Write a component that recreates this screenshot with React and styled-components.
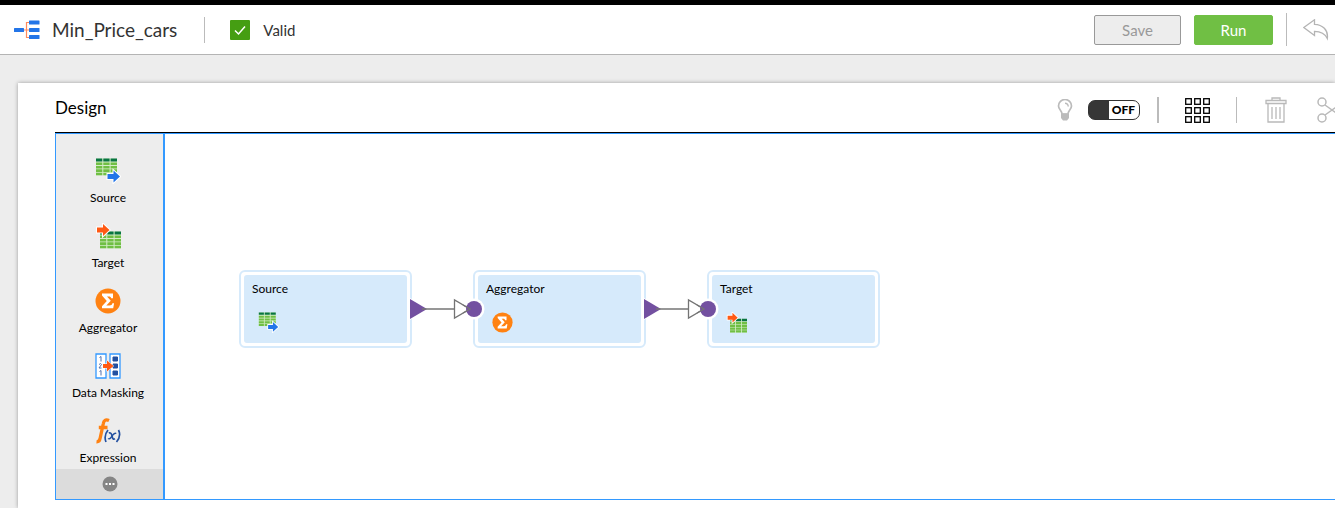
import React from "react";
import styled, { createGlobalStyle } from "styled-components";

const Global = createGlobalStyle`
  * { box-sizing: border-box; }
  body { margin: 0; font-family: Lato, "Liberation Sans", sans-serif; color: #000; background: #ededed; overflow: hidden; }
  button { font-family: inherit; }
`;
const Page = styled.div`
  display: flex; flex-direction: column; min-height: 100vh; overflow: hidden; border-top: 5px solid #000;
`;
const Header = styled.header`
  display: flex; align-items: center; height: 50px; padding: 0 6px 0 14px; background: #fff; border-bottom: 1px solid #b4b4b4;
`;
const Title = styled.h1`
  margin: 0 27px 0 12px; font-size: 19px; line-height: 24px; font-weight: 400; color: #333;
`;
const Divider = styled.span`
  flex: none; width: ${p => p.$wide ? 2 : 1}px; height: ${p => p.$h || 26}px; background: #bbb;
`;
const Status = styled.span`
  display: flex; align-items: center; gap: 13px; margin-left: 25px; font-size: 15px; line-height: 20px; color: #333;
`;
const Actions = styled.div`
  display: flex; align-items: center; gap: 13px; margin-left: auto;
`;
const Button = styled.button`
  width: ${p => p.$primary ? 79 : 87}px; height: 30px; padding: 0; border-radius: 2px; font-size: 15px; line-height: 20px;
  color: ${p => p.$primary ? "#fff" : "#999"};
  background: ${p => p.$primary ? "#70bf44" : "#ededed"};
  border: 1px solid ${p => p.$primary ? "#70bf44" : "#999"};
`;
const IconButton = styled.button`
  display: flex; flex: none; padding: 0; border: 0; background: none;
  margin: 0 ${p => p.$right || 0}px 0 ${p => p.$left || 0}px;
`;
const Panel = styled.main`
  flex: 1; margin: 28px 0 0 18px; padding: 0 0 8px 37px; background: #fff; box-shadow: 0 0 4px rgba(0, 0, 0, 0.35);
`;
const PanelHeader = styled.div`
  display: flex; align-items: center; height: 50px; border-bottom: 1px solid #000;
`;
const PanelTitle = styled.h2`
  margin: 0; font-size: 17px; line-height: 24px; font-weight: 400;
`;
const Tools = styled.div`
  display: flex; align-items: center; margin: 5px -8px 0 auto;
`;
const Switch = styled.button`
  display: flex; align-items: center; justify-content: flex-end; width: 52px; height: 20px; margin: 0 17px 0 15px;
  padding: 0 4px; border: 1px solid #333; border-radius: 7px; font-size: 12px; line-height: 16px; font-weight: 900; color: #000;
  background: linear-gradient(to right, #363636 20px, #fff 20px);
`;
const Workspace = styled.div`
  display: flex; border: 1px solid #3399ff; border-right: 0;
`;
const Palette = styled.nav`
  flex: none; width: 109px; padding-top: 10px; background: #ededed; border-right: 2px solid #3399ff;
`;
const PaletteItem = styled.button`
  display: flex; flex-direction: column; align-items: center; gap: 6px; width: 100%; height: 65px; padding: 14px 3px 0 0;
  border: 0; background: none; font-size: 12px; line-height: 16px; color: #000; white-space: nowrap;
`;
const More = styled.button`
  display: flex; align-items: center; justify-content: center; width: 100%; height: 30px; padding: 0; border: 0; background: #dcdcdc;
`;
const Canvas = styled.div`
  position: relative; flex: 1; min-width: 0; overflow: hidden;
`;
const Node = styled.section`
  position: absolute; top: 136px; left: ${p => p.$x}px; width: 173px; height: 78px; padding: 3px;
  background: #fff; border: 2px solid #d6eafb; border-radius: 6px;
`;
const NodeBody = styled.div`
  height: 100%; padding: 6px 8px; background: #d6eafb; border-radius: 3px;
`;
const NodeTitle = styled.h3`
  margin: 0 0 15px; font-size: 12px; line-height: 16px; font-weight: 400;
`;
const NodeIcon = styled.div`
  display: flex; margin-left: 6px;
`;
const Link = styled.svg`
  position: absolute; top: 162px; left: ${p => p.$x}px;
`;

const Table = ({ x, y }) => (
  <g>
    <rect x={x} y={y} width="21" height="17" fill="#d5edc8" />
    <path d={`M${x} ${y}h6.3v3h-6.3zm7.3 0h6.3v3h-6.3zm7.3 0h6.4v3h-6.4z`} fill="#087541" />
    {[4, 7.4, 10.8, 14.2].map(r => (
      <path key={r} d={`M${x} ${y + r}h6.3v2.6h-6.3zm7.3 0h6.3v2.6h-6.3zm7.3 0h6.4v2.6h-6.4z`} fill="#70bf44" />
    ))}
  </g>
);
const arrow = "v-5h6v-3.500l6.500 6-6.500 6v-3.500z";
const SourceIcon = ({ size = 26 }) => (
  <svg width={size} height={size} viewBox="0 0 26 26">
    <Table x={1} y={0.5} />
    <path d={"M12.500 21" + arrow} fill="#2375e8" stroke="#fff" strokeWidth="2" paintOrder="stroke" />
  </svg>
);
const TargetIcon = ({ size = 26 }) => (
  <svg width={size} height={size} viewBox="0 0 26 26">
    <Table x={5} y={8.5} />
    <path d={"M2 9.500" + arrow} fill="#ff5a14" stroke="#fff" strokeWidth="2" paintOrder="stroke" />
  </svg>
);
const SigmaIcon = ({ size = 26 }) => (
  <svg width={size} height={size} viewBox="0 0 26 26">
    <circle cx="13" cy="13" r="12.5" fill="#ff8212" />
    <path d="M7 5.500h11v4.800h-1.800c-.3-1.300-1-1.800-2.400-1.800h-1.800l3.800 4.200-4.500 4.800h3.200c1.800 0 2.500-.7 2.900-2.200h1.700l-.9 5H7v-2l4.800-5.200L7 7.500z" fill="#fff" />
  </svg>
);
const MaskIcon = () => (
  <svg width="26" height="26" viewBox="0 0 26 26">
    <path d="M1 1h10v24H1zM15 1h10v24H15z" fill="#fff" stroke="#3399ff" strokeWidth="1.3" />
    <path d="M4.500 4.500l1.500-1v5M4.500 18.500l1.500-1v5M4 11.500q2-2 2.500 0L4 15h2.500" fill="none" stroke="#5070ad" />
    <path d="M18 4h4.500v4H18zM18 11h4.500v4H18zM18 18h4.500v4H18z" fill="#2350a0" stroke="#2350a0" strokeLinejoin="round" />
    <path d="M8 15v-4h4V7.500l6.500 5.500-6.500 5.500V15z" fill="#ff5a14" stroke="#fff" paintOrder="stroke" />
  </svg>
);
const FxIcon = () => (
  <svg width="26" height="26" viewBox="0 0 26 26">
    <path d="M14 2.600C10.500 1 8.800 2.500 8.200 6L5.200 20Q4.500 24 1.500 23.800M3.800 9.500h8.700" fill="none" stroke="#ff8212" strokeWidth="3.300" />
    <path d="M13 12q-4.500 5.500-2 12M23.500 12q3 6-2 12M13.800 15q2.200-.8 3 2l.8 3q.5 1.800 2.400.8" fill="none" stroke="#2350a0" strokeWidth="1.700" />
    <path d="M21.300 15.500q-1.500-1-3.500 1.500l-1.800 2.500q-1.500 2-3 1" fill="none" stroke="#2350a0" strokeWidth="1.300" />
  </svg>
);
const MappingIcon = () => (
  <svg width="26" height="20" viewBox="0 0 26 20">
    <path d="M10 10h6M16 2.500h-3.500v15H16" fill="none" stroke="#ff8b5c" strokeWidth="1.200" />
    <rect y="8" width="10" height="4" rx=".5" fill="#2375e8" />
    {[0.5, 8, 15].map(y => <rect key={y} x="15" y={y} width="10.500" height="4" rx=".5" fill="#2375e8" />)}
  </svg>
);
const CheckIcon = () => (
  <svg width="20" height="20" viewBox="0 0 20 20">
    <rect width="20" height="20" rx="1" fill="#459e12" />
    <path d="M5 10.500l3.500 3.500L15 6.500" fill="none" stroke="#fff" strokeWidth="1.500" />
  </svg>
);
const UndoIcon = () => (
  <svg width="26" height="22" viewBox="0 0 26 22" fill="none" stroke="#b4b4b4" strokeWidth="1.300">
    <path d="M.8 8.500L11.500 .8v4.500C19.500 5.500 25.500 11 24.300 19.500 22 14.500 17 12.300 11.500 12.300v4.200z" />
  </svg>
);
const BulbIcon = () => (
  <svg width="16" height="22" viewBox="0 0 16 22">
    <path d="M5 15C5 11.500 1.500 10.500 1.500 7a6.300 6.300 0 0 1 13 0C14.500 10.500 11 11.500 11 15z" fill="none" stroke="#bbb" strokeWidth="1.700" />
    <path d="M4 14.500h8v4.500L10 21.500H6L4 19zM8 3.500q3.500 0 4 4h-1.500q0-2.500-2.500-2.500z" fill="#bbb" />
  </svg>
);
const GridIcon = () => (
  <svg width="25" height="25" viewBox="0 0 25 25" fill="none" stroke="#000" strokeWidth="1.300">
    {[0, 9, 18].map(y => [0, 9, 18].map(x => <rect key={`${x}-${y}`} x={x + 0.7} y={y + 0.7} width="5.600" height="5.600" />))}
  </svg>
);
const TrashIcon = () => (
  <svg width="22" height="26" viewBox="0 0 22 26" fill="none" stroke="#b9b9b9" strokeWidth="1.300">
    <path d="M1 3.500h20v3H1zM7 3.500V1h8v2.500M3 6.500V25h16V6.500M7 10v12M11 10v12M15 10v12" />
  </svg>
);
const CutIcon = () => (
  <svg width="26" height="26" viewBox="0 0 26 26" fill="none" stroke="#b9b9b9" strokeWidth="1.500">
    <circle cx="5" cy="5" r="4" /><circle cx="5" cy="21" r="4" />
    <path d="M8 8l17 12M8 18L25 6" />
  </svg>
);

const transformations = [
  ["Source", SourceIcon], ["Target", TargetIcon], ["Aggregator", SigmaIcon], ["Data Masking", MaskIcon], ["Expression", FxIcon],
];
const nodes = [
  { name: "Source", x: 74, Icon: SourceIcon },
  { name: "Aggregator", x: 308, Icon: SigmaIcon },
  { name: "Target", x: 542, Icon: TargetIcon },
];
const Connector = ({ x }) => (
  <Link $x={x} width="80" height="26" viewBox="0 0 80 26">
    <path d="M3 2v22l18-11z" fill="#fff" />
    <path d="M3 3v20l17-10z" fill="#7350a0" />
    <circle cx="67" cy="13" r="10.500" fill="#fff" />
    <path d="M15 13h33" stroke="#747474" strokeWidth="1.500" />
    <path d="M47.500 4v18L63 13z" fill="#fff" stroke="#747474" strokeWidth="1.300" />
    <circle cx="67" cy="13" r="8" fill="#7350a0" />
    <path d="M56 9l7 4-7 4" fill="none" stroke="#747474" strokeWidth="1.300" />
  </Link>
);

export default function App() {
  return (
    <Page>
      <Global />
      <Header>
        <MappingIcon />
        <Title>Min_Price_cars</Title>
        <Divider />
        <Status><CheckIcon />Valid</Status>
        <Actions>
          <Button disabled>Save</Button>
          <Button $primary>Run</Button>
          <Divider $h={33} />
          <IconButton $left={3} aria-label="Undo"><UndoIcon /></IconButton>
        </Actions>
      </Header>
      <Panel>
        <PanelHeader>
          <PanelTitle>Design</PanelTitle>
          <Tools>
            <IconButton aria-label="Recommendations"><BulbIcon /></IconButton>
            <Switch role="switch" aria-checked="false">OFF</Switch>
            <Divider $wide />
            <IconButton $left={26} $right={26} aria-label="Arrange"><GridIcon /></IconButton>
            <Divider />
            <IconButton $left={28} $right={30} aria-label="Delete"><TrashIcon /></IconButton>
            <IconButton aria-label="Cut"><CutIcon /></IconButton>
          </Tools>
        </PanelHeader>
        <Workspace>
          <Palette>
            {transformations.map(([name, Icon]) => (
              <PaletteItem key={name}><Icon />{name}</PaletteItem>
            ))}
            <More aria-label="More">
              <svg width="16" height="16" viewBox="0 0 16 16">
                <circle cx="8" cy="8" r="7.500" fill="#858585" />
                <path d="M3.500 7h2v2h-2zM7 7h2v2H7zM10.500 7h2v2h-2z" fill="#fff" />
              </svg>
            </More>
          </Palette>
          <Canvas>
            {nodes.map(({ name, x, Icon }) => (
              <Node key={name} $x={x}>
                <NodeBody>
                  <NodeTitle>{name}</NodeTitle>
                  <NodeIcon><Icon size={21} /></NodeIcon>
                </NodeBody>
              </Node>
            ))}
            <Connector x={242} />
            <Connector x={476} />
          </Canvas>
        </Workspace>
      </Panel>
    </Page>
  );
}
